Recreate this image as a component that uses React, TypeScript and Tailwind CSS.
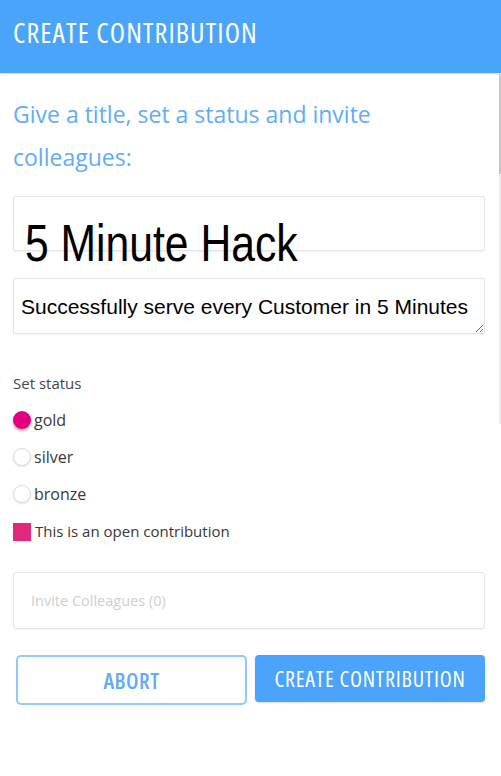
import { useState } from 'react'

const ui = "font-['Open_Sans',sans-serif]"

function Radio({ label, checked, onClick }: { label: string; checked: boolean; onClick: () => void }) {
  return (
    <button onClick={onClick} className="flex items-center h-[37px] text-left">
      <span
        className={
          checked
            ? 'w-[18px] h-[18px] rounded-full bg-[#e4007c] shadow-[0_2px_3px_rgba(0,0,0,0.35)]'
            : 'w-[18px] h-[18px] rounded-full bg-white border border-[#dcdcdc] shadow-[0_1px_2px_rgba(0,0,0,0.12)]'
        }
      />
      <span className={`${ui} ml-[3px] text-[16px] text-[#383838]`}>{label}</span>
    </button>
  )
}

export default function App() {
  const [status, setStatus] = useState('gold')
  const [open, setOpen] = useState(true)

  return (
    <div className="relative w-[501px] h-[776px] bg-white overflow-hidden">
      {/* Header */}
      <div className="h-[73px] bg-[#4aa5fa] px-[13px] pt-[11px] shadow-[0_1px_2px_rgba(0,0,0,0.15)]">
        <h1 className={`${ui} font-stretch-[80%] text-[28px] leading-[42px] text-white tracking-[1.1px]`}>
          CREATE CONTRIBUTION
        </h1>
      </div>

      {/* scrollbar sliver */}
      <div className="absolute right-0 top-[74px] w-[2px] h-[100px] bg-[#c8c8c8]" />
      <div className="absolute right-0 top-[174px] w-[2px] h-[250px] bg-[#ececec]" />

      <div className="px-[13px] flex flex-col">
        <p className={`${ui} mt-[20px] max-w-[440px] text-[23px] leading-[43px] text-[#62adf5]`}>
          Give a title, set a status and invite colleagues:
        </p>

        {/* Title */}
        <div className="mt-[17px] h-[55px] w-[472px] border border-[#e4e4e4] rounded-[2px] shadow-[0_1px_2px_rgba(0,0,0,0.06)]">
          <div className="pt-[20px] pl-[11px] whitespace-nowrap">
            <span className="inline-block origin-left scale-x-[0.82] font-['Liberation_Sans',Arial,sans-serif] text-[52px] leading-none text-black">
              5 Minute Hack
            </span>
          </div>
        </div>

        {/* Description */}
        <textarea
          className="mt-[27px] h-[56px] w-[472px] border border-[#e4e4e4] rounded-[2px] shadow-[0_1px_2px_rgba(0,0,0,0.06)] pt-[16px] pl-[7px] font-['Liberation_Sans',Arial,sans-serif] text-[21px] leading-[24px] text-black outline-none overflow-hidden"
          defaultValue="Successfully serve every Customer in 5 Minutes"
        />

        <div className={`${ui} mt-[38px] text-[15px] leading-[22px] text-[#444]`}>Set status</div>

        <div className="mt-[7px] flex flex-col items-start">
          {['gold', 'silver', 'bronze'].map(s => (
            <Radio key={s} label={s} checked={status === s} onClick={() => setStatus(s)} />
          ))}
          <button onClick={() => setOpen(!open)} className="flex items-center h-[39px] text-left">
            <span className={open ? 'w-[18px] h-[18px] bg-[#e2287a]' : 'w-[18px] h-[18px] bg-white border border-[#ccc]'} />
            <span className={`${ui} ml-[4px] text-[15px] text-[#383838]`}>This is an open contribution</span>
          </button>
        </div>

        {/* Invite */}
        <div className="mt-[21px] h-[57px] w-[472px] border border-[#e6e6e6] rounded-[3px] shadow-[0_1px_2px_rgba(0,0,0,0.05)] flex items-center pl-[17px]">
          <span className={`${ui} text-[14.5px] text-[#cfcfcf]`}>Invite Colleagues (0)</span>
        </div>

        {/* Buttons */}
        <div className="mt-[26px] flex gap-[8px] pl-[3px]">
          <button className="w-[231px] h-[50px] rounded-[5px] border-2 border-[#93c8fc] bg-white flex items-center justify-center">
            <span className={`${ui} font-stretch-[80%] text-[22px] font-semibold tracking-[0.5px] text-[#62acf5]`}>ABORT</span>
          </button>
          <button className="w-[230px] h-[47px] rounded-[4px] bg-[#4ba4f9] shadow-[0_1px_2px_rgba(0,0,0,0.15)] flex items-center justify-center">
            <span className={`${ui} font-stretch-[80%] text-[22px] tracking-[0.8px] text-white`}>CREATE CONTRIBUTION</span>
          </button>
        </div>
      </div>
    </div>
  )
}
